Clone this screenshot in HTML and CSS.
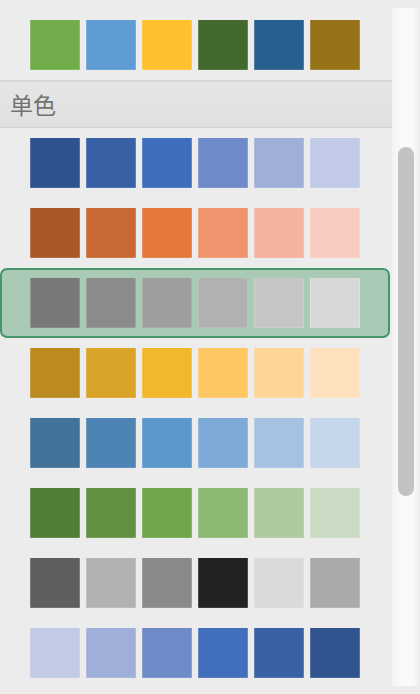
FILE: index.html
```html
<!DOCTYPE html>
<html lang="zh">
<head>
<meta charset="utf-8">
<link rel="stylesheet" href="styles.css">
</head>
<body>
<div class="panel">
  <div class="content">
    <div class="row row-first">
      <span class="sw" style="background:#72ad4b"></span>
      <span class="sw" style="background:#5e9cd4"></span>
      <span class="sw" style="background:#fec02e"></span>
      <span class="sw" style="background:#44692e"></span>
      <span class="sw" style="background:#275f8e"></span>
      <span class="sw" style="background:#967218"></span>
    </div>
    <div class="section-head">单色</div>
    <div class="row">
      <span class="sw" style="background:#2f5290"></span>
      <span class="sw" style="background:#3961a6"></span>
      <span class="sw" style="background:#3f6ebd"></span>
      <span class="sw" style="background:#6f8ac8"></span>
      <span class="sw" style="background:#a0afda"></span>
      <span class="sw" style="background:#c1cbe7"></span>
    </div>
    <div class="row">
      <span class="sw" style="background:#aa5828"></span>
      <span class="sw" style="background:#c86a33"></span>
      <span class="sw" style="background:#e3783a"></span>
      <span class="sw" style="background:#ef946c"></span>
      <span class="sw" style="background:#f4b39d"></span>
      <span class="sw" style="background:#f7cbbf"></span>
    </div>
    <div class="row selected">
      <span class="sw" style="background:#797979"></span>
      <span class="sw" style="background:#8b8b8b"></span>
      <span class="sw" style="background:#9e9e9e"></span>
      <span class="sw" style="background:#b1b1b1"></span>
      <span class="sw" style="background:#c5c5c5"></span>
      <span class="sw" style="background:#d8d8d8"></span>
    </div>
    <div class="row">
      <span class="sw" style="background:#bb8b1f"></span>
      <span class="sw" style="background:#d9a427"></span>
      <span class="sw" style="background:#f1b72d"></span>
      <span class="sw" style="background:#fec764"></span>
      <span class="sw" style="background:#fdd597"></span>
      <span class="sw" style="background:#fee0bd"></span>
    </div>
    <div class="row">
      <span class="sw" style="background:#427298"></span>
      <span class="sw" style="background:#4e84b3"></span>
      <span class="sw" style="background:#5a97ca"></span>
      <span class="sw" style="background:#7eaad8"></span>
      <span class="sw" style="background:#a5c2e2"></span>
      <span class="sw" style="background:#c5d5ea"></span>
    </div>
    <div class="row">
      <span class="sw" style="background:#527d37"></span>
      <span class="sw" style="background:#629241"></span>
      <span class="sw" style="background:#70a54a"></span>
      <span class="sw" style="background:#8cb873"></span>
      <span class="sw" style="background:#adc99f"></span>
      <span class="sw" style="background:#c9dbc3"></span>
    </div>
    <div class="row">
      <span class="sw" style="background:#5f5f5f"></span>
      <span class="sw" style="background:#b2b2b2"></span>
      <span class="sw" style="background:#8a8a8a"></span>
      <span class="sw" style="background:#222222"></span>
      <span class="sw" style="background:#dadada"></span>
      <span class="sw" style="background:#aaaaaa"></span>
    </div>
    <div class="row">
      <span class="sw" style="background:#c1cbe6"></span>
      <span class="sw" style="background:#9fafda"></span>
      <span class="sw" style="background:#6f8ac8"></span>
      <span class="sw" style="background:#416fbb"></span>
      <span class="sw" style="background:#3961a6"></span>
      <span class="sw" style="background:#30548f"></span>
    </div>
  </div>
  <div class="scrollbar">
    <div class="thumb"></div>
  </div>
</div>
</body>
</html>
```
FILE: styles.css
```css
html, body {
  margin: 0;
  padding: 0;
  width: 420px;
  height: 694px;
  overflow: hidden;
  background: #ececec;
  font-family: "Noto Sans CJK SC", "Noto Sans", sans-serif;
}

.panel {
  display: flex;
  width: 420px;
  height: 694px;
}

.content {
  width: 392px;
  flex: none;
  padding-top: 10px;
}

.row {
  display: flex;
  align-items: center;
  gap: 6px;
  height: 70px;
  padding-left: 30px;
  box-sizing: border-box;
}

.row.selected {
  width: 390px;
  border: 2px solid #43966a;
  border-radius: 7px;
  background: #a9cbb6;
  padding-left: 28px;
}

.sw {
  display: block;
  width: 50px;
  height: 50px;
  flex: none;
  box-shadow: inset 1px 0 0 rgba(255,255,255,0.18), inset -1px 0 0 rgba(255,255,255,0.18), inset 0 -1px 0 rgba(255,255,255,0.12);
}

.section-head {
  height: 48px;
  box-sizing: border-box;
  border-top: 2px solid #d9d9d9;
  border-bottom: 1px solid #d4d4d4;
  background: linear-gradient(#e6e6e6, #e0e0e0);
  padding-left: 10px;
  display: flex;
  align-items: center;
  font-size: 23px;
  color: #727272;
  line-height: 1;
}

.scrollbar {
  width: 26px;
  flex: none;
  margin: 8px 0;
  background: linear-gradient(90deg, #f3f3f3, #fafafa 40%, #f9f9f9 80%, #f2f2f2);
  box-sizing: border-box;
  padding-top: 139px;
  padding-left: 6px;
}

.thumb {
  width: 16px;
  height: 349px;
  border-radius: 8px;
  background: #c2c2c2;
}
```
